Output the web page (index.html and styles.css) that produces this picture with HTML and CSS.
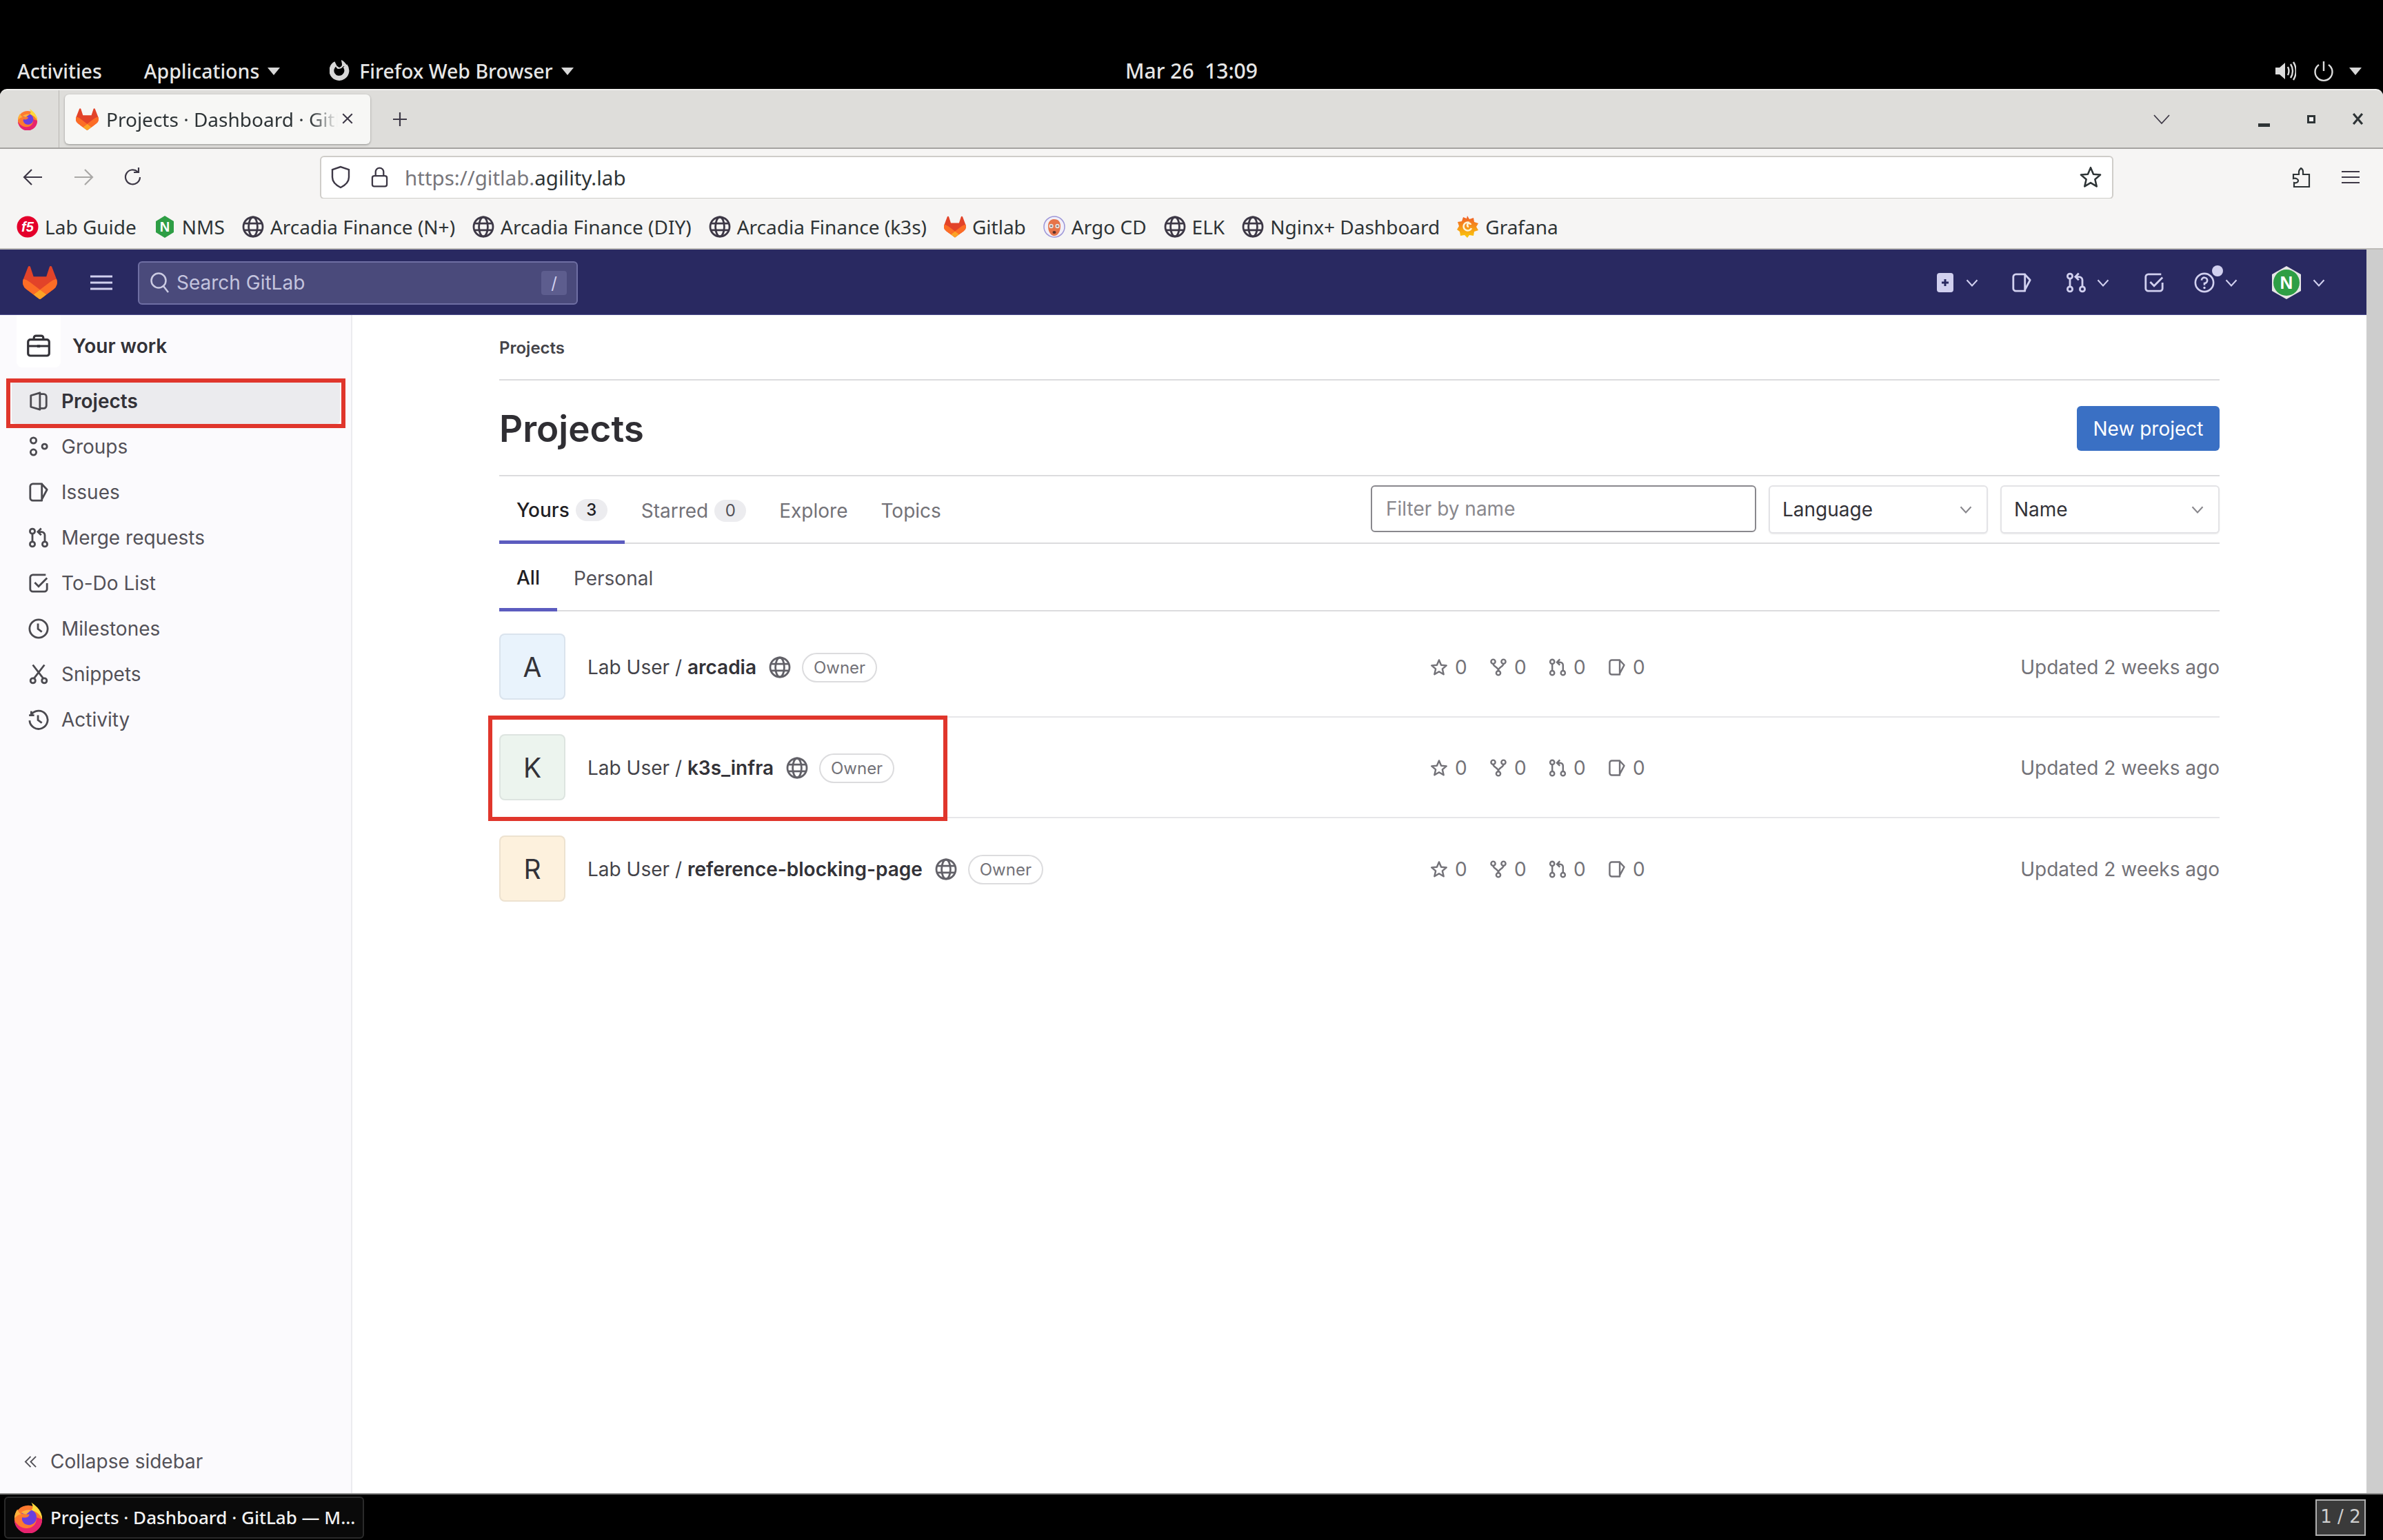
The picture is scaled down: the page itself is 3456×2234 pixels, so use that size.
FILE: index.html
```html
<!DOCTYPE html>
<html>
<head>
<meta charset="UTF-8">
<title>Projects · Dashboard · GitLab</title>
<link rel="stylesheet" href="styles.css">
</head>
<body>
<svg class="sprite" xmlns="http://www.w3.org/2000/svg">
  <symbol id="tanuki" viewBox="0 0 25 24">
    <path d="M24.507 9.5l-.034-.09L21.082.562a.896.896 0 00-1.694.091l-2.29 7.01H7.825L5.535.653a.898.898 0 00-1.694-.09L.451 9.411.416 9.5a6.297 6.297 0 002.09 7.278l.012.01.03.022 5.16 3.867 2.56 1.935 1.554 1.176a1.051 1.051 0 001.268 0l1.555-1.176 2.56-1.935 5.197-3.89.014-.01A6.297 6.297 0 0024.507 9.5z" fill="#E24329"/>
    <path d="M24.507 9.5l-.034-.09a11.44 11.44 0 00-4.56 2.051l-7.447 5.632 4.742 3.584 5.197-3.89.014-.01A6.297 6.297 0 0024.507 9.5z" fill="#FC6D26"/>
    <path d="M7.707 20.677l2.56 1.935 1.555 1.176a1.051 1.051 0 001.268 0l1.555-1.176 2.56-1.935-4.743-3.584-4.755 3.584z" fill="#FCA326"/>
    <path d="M5.01 11.461a11.43 11.43 0 00-4.56-2.05L.416 9.5a6.297 6.297 0 002.09 7.278l.012.01.03.022 5.16 3.867 4.745-3.584-7.444-5.632z" fill="#FC6D26"/>
  </symbol>
  <symbol id="firefox" viewBox="0 0 32 32">
    <circle cx="16" cy="18" r="14" fill="#ff7a2f"/>
    <path d="M30 18a14 14 0 0 1-28 1c3 6 9 9 14 8 6-1 9-6 8-11l6 2z" fill="#e6236f"/>
    <path d="M19 1c6 4 11 9 11 17-2-5-6-8-11-9 2-2 2-5 0-8z" fill="#ffd93b"/>
    <path d="M5 8c-2 3-3 6-3 9 3-3 5-4 7-4-2-1-3-3-4-5z" fill="#ffb13b"/>
    <path d="M9 12c3-3 7-4 11-3 4 2 5 6 4 9-1 5-7 7-11 5-3-2-4-5-3-7 3 1 7 0 7-3-3 0-6 0-8-1z" fill="#6a3fe0"/>
    <path d="M9 11c3-2 7-3 10-2-2 1-4 3-5 4-2 0-4-1-5-2z" fill="#ffb13b"/>
  </symbol>
  <symbol id="globe" viewBox="0 0 16 16">
    <g fill="none" stroke="currentColor" stroke-width="1.4">
      <circle cx="8" cy="8" r="7"/>
      <ellipse cx="8" cy="8" rx="3.2" ry="7"/>
      <path d="M1.2 5.6h13.6M1.2 10.4h13.6"/>
    </g>
  </symbol>
  <symbol id="i-project" viewBox="0 0 16 16">
    <path d="M2 3.6 9 1.500v13l-7-2.100zM9 2.500h3a2 2 0 0 1 2 2v7a2 2 0 0 1-2 2H9" fill="none" stroke="currentColor" stroke-width="1.500" stroke-linejoin="round"/>
  </symbol>
  <symbol id="i-group" viewBox="0 0 16 16">
    <g fill="none" stroke="currentColor" stroke-width="1.500">
      <circle cx="4" cy="3.200" r="2.200"/><circle cx="4" cy="12.300" r="2.200"/><circle cx="12.600" cy="7.800" r="1.900"/>
    </g>
  </symbol>
  <symbol id="i-issue" viewBox="0 0 16 16">
    <path d="M1.500 3.500a2 2 0 0 1 2-2h7v13h-7a2 2 0 0 1-2-2zM10.500 1.700l4 4.300-4 7.500" fill="none" stroke="currentColor" stroke-width="1.500" stroke-linejoin="round"/>
  </symbol>
  <symbol id="i-merge" viewBox="0 0 16 16">
    <g fill="none" stroke="currentColor" stroke-width="1.500">
      <circle cx="3.200" cy="3" r="1.900"/><circle cx="3.200" cy="13" r="1.900"/><circle cx="12.800" cy="13" r="1.900"/>
      <path d="M3.200 5v6M12.800 11V6a2.500 2.500 0 0 0-2.500-2.500H8M10 .8 7.400 3.500 10 6"/>
    </g>
  </symbol>
  <symbol id="i-todo" viewBox="0 0 16 16">
    <path d="M14.500 8v4.500a2 2 0 0 1-2 2h-9a2 2 0 0 1-2-2v-9a2 2 0 0 1 2-2h10M5 7.500l3 3 6.500-6.500" fill="none" stroke="currentColor" stroke-width="1.500"/>
  </symbol>
  <symbol id="i-clock" viewBox="0 0 16 16">
    <g fill="none" stroke="currentColor" stroke-width="1.500"><circle cx="8" cy="8" r="7"/><path d="M7.500 4v4.200l3 2.300"/></g>
  </symbol>
  <symbol id="i-snippet" viewBox="0 0 16 16">
    <g fill="none" stroke="currentColor" stroke-width="1.500">
      <circle cx="3.600" cy="13" r="1.900"/><circle cx="12.400" cy="13" r="1.900"/>
      <path d="M3.500 .8 11.600 11.300M12.500 .8 4.400 11.300"/>
    </g>
  </symbol>
  <symbol id="i-history" viewBox="0 0 16 16">
    <g fill="none" stroke="currentColor" stroke-width="1.500"><path d="M2.200 4.200A7 7 0 1 1 1 8.600M.6 4.600h4M2.400 1.400l-.2 3.200M7.500 4.500v3.800l3 2.200"/></g>
  </symbol>
  <symbol id="i-work" viewBox="0 0 16 16">
    <g fill="none" stroke="currentColor" stroke-width="1.500"><rect x=".8" y="3.600" width="14.400" height="11" rx="1.600"/><path d="M4.800 3.600V2.400a1.400 1.400 0 0 1 1.400-1.400h3.600a1.400 1.400 0 0 1 1.400 1.400v1.200M.8 8h14.400"/></g>
    <rect x="7" y="7.200" width="2" height="1.800" fill="currentColor"/>
  </symbol>
  <symbol id="i-star" viewBox="0 0 16 16">
    <path d="M8 1.500 9.900 6l4.700.4-3.600 3.100 1.100 4.800L8 11.800l-4.100 2.500L5 9.500 1.400 6.400 6.100 6z" fill="none" stroke="currentColor" stroke-width="1.500" stroke-linejoin="round"/>
  </symbol>
  <symbol id="i-fork" viewBox="0 0 16 16">
    <g fill="none" stroke="currentColor" stroke-width="1.500">
      <circle cx="3.400" cy="2.900" r="1.900"/><circle cx="12.600" cy="2.900" r="1.900"/><circle cx="8" cy="13.100" r="1.900"/>
      <path d="M3.400 4.800c0 3 4.600 2.600 4.600 6.400M12.600 4.800C12.600 7.800 8 7.400 8 11.200"/>
    </g>
  </symbol>
  <symbol id="i-chevron" viewBox="0 0 16 16">
    <path d="M3 5.500 8 11l5-5.500" fill="none" stroke="currentColor" stroke-width="1.400"/>
  </symbol>
</svg>

<div class="screen">
  <div class="topgap"></div>

  <div class="panel">
    <span class="panel-item activities">Activities</span>
    <span class="panel-item apps">Applications<i class="tri"></i></span>
    <span class="panel-item ffx">
      <svg class="ffx-mono" viewBox="0 0 32 32"><path d="M22.500 9.500A11 11 0 1 1 9 6.500" fill="none" stroke="#d8d8d8" stroke-width="7"/><path d="M9 9c3 1 5 3 5 3 2-1 4-2 4-4 0-3-1-5-1-7 4 2 8 6 9 11l-6-2c-2 3-5 4-8 4-2-1-3-3-3-5z" fill="#d8d8d8"/></svg>
      Firefox Web Browser<i class="tri"></i>
    </span>
    <span class="clock">Mar 26&nbsp; 13:09</span>
    <span class="tray">
      <svg class="tray-vol" viewBox="0 0 32 32"><path d="M2 11h6l8-7v24l-8-7H2z" fill="#dcdcdc"/><path d="M20 10c2 4 2 8 0 12M24 6c4 6 4 14 0 20M28 3c5 8 5 18 0 26" fill="none" stroke="#dcdcdc" stroke-width="2.400"/></svg>
      <svg class="tray-pow" viewBox="0 0 32 32"><path d="M16 2v14M9 7a12.500 12.500 0 1 0 14 0" fill="none" stroke="#dcdcdc" stroke-width="2.400"/></svg>
      <i class="tri"></i>
    </span>
  </div>

  <div class="window">
    <div class="tabbar">
      <svg class="tb-ff"><use href="#firefox"/></svg>
      <div class="tab-sep"></div>
      <div class="tab">
        <svg class="tab-fav"><use href="#tanuki"/></svg>
        <span class="tab-title">Projects · Dashboard · GitLab</span>
        <svg class="tab-x" viewBox="0 0 16 16"><path d="M2 2l12 12M14 2 2 14" stroke="#3d3846" stroke-width="1.800"/></svg>
      </div>
      <svg class="tab-new" viewBox="0 0 24 24"><path d="M12 2v20M2 12h20" stroke="#3d3846" stroke-width="2.200"/></svg>
      <div class="tb-right">
        <svg class="tb-list" viewBox="0 0 26 16"><path d="M2 2l11 12L24 2" fill="none" stroke="#3d3846" stroke-width="1.800"/></svg>
        <span class="wm wm-min"></span>
        <span class="wm wm-max"></span>
        <svg class="wm-x" viewBox="0 0 16 16"><path d="M2 1l12 14M14 1 2 15" stroke="#2e3436" stroke-width="3"/></svg>
      </div>
    </div>

    <div class="navrow">
      <svg class="nav-ic back" viewBox="0 0 30 26"><path d="M28 13H3M13 2 2 13l11 11" fill="none" stroke="#3d3846" stroke-width="2.200"/></svg>
      <svg class="nav-ic fwd" viewBox="0 0 30 26"><path d="M2 13h25M17 2l11 11-11 11" fill="none" stroke="#a9a8a6" stroke-width="2.200"/></svg>
      <svg class="nav-ic reload" viewBox="0 0 30 30"><path d="M25 15a10.500 10.500 0 1 1-3.500-8M23 1v7h-7" fill="none" stroke="#3d3846" stroke-width="2.200"/></svg>
      <div class="urlbar">
        <svg class="shield" viewBox="0 0 30 34"><path d="M15 2 3 6v11c0 8 6 12 12 15 6-3 12-7 12-15V6z" fill="none" stroke="#3d3846" stroke-width="2.400"/></svg>
        <svg class="lock" viewBox="0 0 26 32"><rect x="2" y="14" width="22" height="16" rx="3" fill="none" stroke="#3d3846" stroke-width="2.400"/><path d="M7 14V8a6 6 0 0 1 12 0v6" fill="none" stroke="#3d3846" stroke-width="2.400"/></svg>
        <span class="url"><span class="url-dim">https://gitlab.</span>agility.lab</span>
        <svg class="url-star" viewBox="0 0 16 16"><path d="M8 1.500 9.900 6l4.700.4-3.600 3.100 1.100 4.800L8 11.800l-4.100 2.500L5 9.500 1.400 6.400 6.100 6z" fill="none" stroke="#2e3436" stroke-width="1.200" stroke-linejoin="round"/></svg>
      </div>
      <svg class="puzzle" viewBox="0 0 28 32"><path d="M2 12h8V8c0-2 1-3 3-5 2 1 3 3 3 5v4h9v18H3v-6c4 1 6-1 6-3s-3-4-7-3z" fill="none" stroke="#2e3436" stroke-width="2.200"/></svg>
      <svg class="menu" viewBox="0 0 26 20"><path d="M0 2h26M0 10h26M0 18h26" stroke="#3d3846" stroke-width="2.200"/></svg>
    </div>

    <div class="bookmarks">
      <span class="bm"><svg class="bm-ic" viewBox="0 0 32 32"><circle cx="16" cy="16" r="15.500" fill="#e4002b"/><text x="16" y="23" text-anchor="middle" class="f5">f5</text></svg>Lab Guide</span>
      <span class="bm"><svg class="bm-ic" viewBox="0 0 32 32"><path d="M16 0l13 8v16l-13 8-13-8V8z" fill="#2e9e45"/><text x="16" y="23" text-anchor="middle" class="nx">N</text></svg>NMS</span>
      <span class="bm"><svg class="bm-ic bm-globe"><use href="#globe"/></svg>Arcadia Finance (N+)</span>
      <span class="bm"><svg class="bm-ic bm-globe"><use href="#globe"/></svg>Arcadia Finance (DIY)</span>
      <span class="bm"><svg class="bm-ic bm-globe"><use href="#globe"/></svg>Arcadia Finance (k3s)</span>
      <span class="bm"><svg class="bm-ic"><use href="#tanuki"/></svg>Gitlab</span>
      <span class="bm"><svg class="bm-ic" viewBox="0 0 32 32"><circle cx="16" cy="16" r="15" fill="#f2eff8" stroke="#9d97d8" stroke-width="1.500"/><path d="M16 5c6 0 9 4 9 10 0 8-4 14-9 14S7 23 7 15C7 9 10 5 16 5z" fill="#e6744a"/><circle cx="11.500" cy="15" r="3.200" fill="#e8ddd8"/><circle cx="20.500" cy="15" r="3.200" fill="#e8ddd8"/><circle cx="11.500" cy="15" r="1.300" fill="#6a6a78"/><circle cx="20.500" cy="15" r="1.300" fill="#6a6a78"/><ellipse cx="16" cy="24" rx="2.500" ry="2" fill="#5a3028"/></svg>Argo CD</span>
      <span class="bm"><svg class="bm-ic bm-globe"><use href="#globe"/></svg>ELK</span>
      <span class="bm"><svg class="bm-ic bm-globe"><use href="#globe"/></svg>Nginx+ Dashboard</span>
      <span class="bm"><svg class="bm-ic" viewBox="0 0 32 32"><defs><linearGradient id="gf" x1="0" y1="0" x2="0" y2="1"><stop offset="0" stop-color="#f05a28"/><stop offset="1" stop-color="#fbca0a"/></linearGradient></defs><path d="M15 0l3 5 6-2 1 6 6 2-3 5 3 5-6 2-1 6-6-1-3 4-4-4-6 1-1-6-4-3 3-5-2-6 6-1 2-6 5 2z" fill="url(#gf)"/><path d="M21 18a6 6 0 1 1-3-8M17 16a2.500 2.500 0 1 1 3-3" fill="none" stroke="#fdf3d8" stroke-width="2.600"/></svg>Grafana</span>
    </div>

    <div class="viewport">
      <div class="page">
        <header class="gl-header">
          <svg class="gl-logo"><use href="#tanuki"/></svg>
          <svg class="gl-burger" viewBox="0 0 32 22"><path d="M0 2h32M0 11h32M0 20h32" stroke="#d1d0ef" stroke-width="3"/></svg>
          <div class="gl-search">
            <svg class="gl-search-ic" viewBox="0 0 28 32"><circle cx="13" cy="13" r="10.500" fill="none" stroke="#cbcbe3" stroke-width="2.500"/><path d="M20 21l7 9" stroke="#cbcbe3" stroke-width="2.500"/></svg>
            <span class="gl-search-text">Search GitLab</span>
            <span class="gl-slash">/</span>
          </div>
          <div class="gl-actions">
            <span class="ga ga-new"><svg class="ga-plus" viewBox="0 0 24 30"><rect y="1" width="24" height="28" rx="4" fill="#d1d0ef"/><path d="M12 10v10M7 15h10" stroke="#292961" stroke-width="3"/></svg><svg class="ga-chev"><use href="#i-chevron"/></svg></span>
            <span class="ga ga-issue"><svg class="ga-ic"><use href="#i-issue"/></svg></span>
            <span class="ga ga-mr"><svg class="ga-ic"><use href="#i-merge"/></svg><svg class="ga-chev"><use href="#i-chevron"/></svg></span>
            <span class="ga ga-todo"><svg class="ga-ic"><use href="#i-todo"/></svg></span>
            <span class="ga ga-help"><svg class="ga-ic" viewBox="0 0 16 16"><circle cx="8" cy="8" r="7" fill="none" stroke="currentColor" stroke-width="1.400"/><path d="M5.800 6.200A2.200 2.200 0 1 1 8 8.500v1.500" fill="none" stroke="currentColor" stroke-width="1.400"/><circle cx="8" cy="12" r=".9" fill="currentColor"/></svg><i class="ga-dot"></i><svg class="ga-chev"><use href="#i-chevron"/></svg></span>
            <span class="ga ga-user"><svg class="ga-avatar" viewBox="0 0 46 48"><path d="M23 0l21 12v24L23 48 2 36V12z" fill="#e6e6e6"/><circle cx="23" cy="24" r="19" fill="#2e9e45"/><text x="23" y="33" text-anchor="middle" class="nx-big">N</text></svg><svg class="ga-chev"><use href="#i-chevron"/></svg></span>
          </div>
        </header>

        <div class="gl-body">
          <aside class="sidebar">
            <div class="side-head">
              <span class="side-head-ic"><svg><use href="#i-work"/></svg></span>
              <span>Your work</span>
            </div>
            <nav class="side-nav">
              <a class="side-item is-active"><svg><use href="#i-project"/></svg>Projects</a>
              <a class="side-item"><svg><use href="#i-group"/></svg>Groups</a>
              <a class="side-item"><svg><use href="#i-issue"/></svg>Issues</a>
              <a class="side-item"><svg><use href="#i-merge"/></svg>Merge requests</a>
              <a class="side-item"><svg><use href="#i-todo"/></svg>To-Do List</a>
              <a class="side-item"><svg><use href="#i-clock"/></svg>Milestones</a>
              <a class="side-item"><svg><use href="#i-snippet"/></svg>Snippets</a>
              <a class="side-item"><svg><use href="#i-history"/></svg>Activity</a>
            </nav>
            <div class="side-collapse">
              <svg viewBox="0 0 20 20"><path d="M10 2 2 10l8 8M18 2l-8 8 8 8" fill="none" stroke="currentColor" stroke-width="2"/></svg>
              Collapse sidebar
            </div>
          </aside>

          <main class="content">
            <div class="crumbs">Projects</div>
            <div class="title-row">
              <h1>Projects</h1>
              <button class="btn-new">New project</button>
            </div>

            <div class="tabs-row">
              <a class="gl-tab is-on">Yours <span class="count">3</span></a>
              <a class="gl-tab">Starred <span class="count">0</span></a>
              <a class="gl-tab">Explore</a>
              <a class="gl-tab">Topics</a>
              <div class="filters">
                <input class="filter-input" type="text" placeholder="Filter by name">
                <div class="select sel-lang">Language<svg><use href="#i-chevron"/></svg></div>
                <div class="select sel-name">Name<svg><use href="#i-chevron"/></svg></div>
              </div>
            </div>

            <div class="subtabs-row">
              <a class="gl-tab sub is-on">All</a>
              <a class="gl-tab sub">Personal</a>
            </div>

            <div class="project first">
              <div class="avatar av-a">A</div>
              <div class="p-title"><span class="p-ns">Lab User / <b>arcadia</b></span><svg class="p-globe"><use href="#globe"/></svg><span class="owner">Owner</span></div>
              <div class="stats">
                <span><svg><use href="#i-star"/></svg>0</span><span><svg><use href="#i-fork"/></svg>0</span><span><svg><use href="#i-merge"/></svg>0</span><span><svg><use href="#i-issue"/></svg>0</span>
              </div>
              <div class="updated">Updated 2 weeks ago</div>
            </div>
            <div class="project">
              <div class="avatar av-k">K</div>
              <div class="p-title"><span class="p-ns">Lab User / <b>k3s_infra</b></span><svg class="p-globe"><use href="#globe"/></svg><span class="owner">Owner</span></div>
              <div class="stats">
                <span><svg><use href="#i-star"/></svg>0</span><span><svg><use href="#i-fork"/></svg>0</span><span><svg><use href="#i-merge"/></svg>0</span><span><svg><use href="#i-issue"/></svg>0</span>
              </div>
              <div class="updated">Updated 2 weeks ago</div>
            </div>
            <div class="project last">
              <div class="avatar av-r">R</div>
              <div class="p-title"><span class="p-ns">Lab User / <b>reference-blocking-page</b></span><svg class="p-globe"><use href="#globe"/></svg><span class="owner">Owner</span></div>
              <div class="stats">
                <span><svg><use href="#i-star"/></svg>0</span><span><svg><use href="#i-fork"/></svg>0</span><span><svg><use href="#i-merge"/></svg>0</span><span><svg><use href="#i-issue"/></svg>0</span>
              </div>
              <div class="updated">Updated 2 weeks ago</div>
            </div>
          </main>
        </div>
      </div>
      <div class="scrollbar"></div>
    </div>
  </div>

  <div class="taskbar">
    <div class="task-btn"><svg><use href="#firefox"/></svg>Projects · Dashboard · GitLab — M...</div>
    <div class="pager">1 / 2</div>
  </div>

  <div class="mark mark-nav"></div>
  <div class="mark mark-row"></div>
</div>
</body>
</html>
```

FILE: styles.css
```css
* { box-sizing: border-box; }

html, body {
  margin: 0;
  padding: 0;
  background: #000;
}

.sprite {
  position: absolute;
  width: 0;
  height: 0;
}

.screen {
  position: relative;
  width: 3456px;
  height: 2234px;
  overflow: hidden;
  display: flex;
  flex-direction: column;
  font-family: "Noto Sans", sans-serif;
}

.topgap { height: 60px; background: #000; }

/* gnome panel */
.panel {
  height: 69px;
  background: #000;
  color: #e6e6e6;
  display: flex;
  align-items: center;
  position: relative;
  font-size: 28.5px;
  font-weight: 500;
  padding-top: 16px;
}
.panel-item { display: flex; align-items: center; white-space: nowrap; }
.activities { margin-left: 25px; }
.apps { margin-left: 61px; }
.ffx { margin-left: 72px; }
.ffx-mono { width: 32px; height: 32px; margin-right: 11px; margin-top: -2px; }
.tri {
  display: inline-block;
  width: 0;
  height: 0;
  margin-left: 12px;
  margin-top: 2px;
  border-left: 9px solid transparent;
  border-right: 9px solid transparent;
  border-top: 11px solid #d8d8d8;
}
.clock {
  position: absolute;
  left: 0;
  right: 0;
  text-align: center;
  font-size: 30px;
}
.tray {
  margin-left: auto;
  margin-right: 31px;
  display: flex;
  align-items: center;
}
.tray-vol { width: 32px; height: 32px; }
.tray-pow { width: 32px; height: 34px; margin-left: 24px; }
.tray .tri { margin-left: 21px; }

/* firefox window */
.window {
  flex: 1;
  min-height: 0;
  display: flex;
  flex-direction: column;
  border-top: 2px solid #f2f1ef;
  border-radius: 10px 10px 0 0;
  overflow: hidden;
  background: #f6f5f4;
}

.tabbar {
  height: 85px;
  background: #deddda;
  border-bottom: 2px solid #a5a3a0;
  display: flex;
  align-items: center;
  position: relative;
}
.tb-ff { width: 32px; height: 32px; margin-left: 24px; }
.tab-sep { width: 1px; height: 100%; background: #b8b6b2; margin-left: 29px; }
.tab {
  width: 443px;
  height: 72px;
  margin-left: 8px;
  margin-top: 1px;
  background: #f7f7f5;
  border-radius: 6px;
  box-shadow: 0 1px 3px rgba(0, 0, 0, .35);
  display: flex;
  align-items: center;
  padding-left: 16px;
  position: relative;
}
.tab-fav { width: 33px; height: 32px; flex: none; }
.tab-title {
  margin-left: 11px;
  width: 336px;
  overflow: hidden;
  white-space: nowrap;
  font-size: 28px;
  color: #2e3436;
  -webkit-mask-image: linear-gradient(90deg, #000 88%, transparent);
  mask-image: linear-gradient(90deg, #000 88%, transparent);
}
.tab-x { width: 18px; height: 18px; position: absolute; right: 24px; top: 26px; }
.tab-new { width: 24px; height: 24px; margin-left: 31px; }
.tb-right {
  margin-left: auto;
  display: flex;
  align-items: center;
}
.tb-list { width: 26px; height: 16px; margin-right: 127px; }
.wm { display: block; background: #2e3436; }
.wm-min { width: 17px; height: 5px; margin-top: 18px; margin-right: 54px; }
.wm-max { width: 12px; height: 12px; border: 3px solid #2e3436; background: #f6f5f4; margin-right: 53px; }
.wm-x { width: 17px; height: 17px; margin-right: 28px; }

.navrow {
  height: 72px;
  display: flex;
  align-items: center;
  padding-top: 10px;
  background: #f6f5f4;
}
.nav-ic { flex: none; }
.back { width: 30px; height: 26px; margin-left: 33px; }
.fwd { width: 30px; height: 26px; margin-left: 43px; }
.reload { width: 30px; height: 30px; margin-left: 42px; }
.urlbar {
  width: 2601px;
  height: 63px;
  margin-left: 256px;
  background: #fff;
  border: 2px solid #cfcdc9;
  border-radius: 6px;
  display: flex;
  align-items: center;
  padding-left: 13px;
}
.shield { width: 30px; height: 34px; }
.lock { width: 25px; height: 32px; margin-left: 29px; }
.url { margin-left: 24px; font-size: 29.5px; color: #2e3436; }
.url-dim { color: #77767b; }
.url-star { width: 34px; height: 34px; margin-left: auto; margin-right: 14px; }
.puzzle { width: 28px; height: 32px; margin-left: 259px; }
.menu { width: 26px; height: 20px; margin-left: 44px; }

.bookmarks {
  height: 74px;
  display: flex;
  align-items: center;
  padding-left: 24px;
  padding-top: 10px;
  gap: 25px;
  background: #f6f5f4;
  border-bottom: 2px solid #bdbbb8;
  font-size: 28px;
  color: #2e3436;
}
.bm { display: flex; align-items: center; white-space: nowrap; }
.bm-ic { width: 32px; height: 32px; margin-right: 9px; flex: none; }
.bm-globe { color: #3d3846; }
.f5 { font: italic 700 20px "Liberation Sans", sans-serif; fill: #fff; }
.nx { font: 700 20px "Liberation Sans", sans-serif; fill: #fff; }

.viewport {
  flex: 1;
  min-height: 0;
  display: flex;
}
.page {
  flex: 1;
  min-width: 0;
  display: flex;
  flex-direction: column;
  background: #fff;
  font-family: Inter, "Noto Sans", sans-serif;
}
.scrollbar { width: 24px; background: #cdcdcd; }

/* gitlab top bar */
.gl-header {
  height: 95px;
  flex: none;
  background: #292961;
  display: flex;
  align-items: center;
  color: #d1d0ef;
  border-bottom: 1px solid #4b4b8a;
  padding-top: 2px;
}
.gl-logo { width: 50px; height: 48px; margin-left: 33px; }
.gl-burger { width: 32px; height: 22px; margin-left: 48px; }
.gl-search {
  width: 638px;
  height: 63px;
  margin-left: 37px;
  background: #4a4a7b;
  border: 2px solid #6f6fa3;
  border-radius: 6px;
  display: flex;
  align-items: center;
  padding-left: 15px;
}
.gl-search-ic { width: 28px; height: 32px; flex: none; }
.gl-search-text { margin-left: 11px; font-size: 28px; color: #c4c4de; }
.gl-slash {
  margin-left: auto;
  margin-right: 14px;
  width: 37px;
  height: 35px;
  border-radius: 4px;
  background: #5d5d8e;
  color: #d1d0ef;
  font-size: 24px;
  text-align: center;
  line-height: 35px;
}
.gl-actions {
  margin-left: auto;
  margin-right: 57px;
  display: flex;
  align-items: center;
}
.ga { display: flex; align-items: center; position: relative; }
.ga-issue { margin-left: 45px; }
.ga-mr { margin-left: 49px; }
.ga-todo { margin-left: 47px; }
.ga-help { margin-left: 43px; }
.ga-user { margin-left: 45px; }
.ga-plus { width: 24px; height: 30px; margin-right: 3px; }
.ga-ic { width: 30px; height: 32px; }
.ga-chev { width: 24px; height: 24px; margin-left: 12px; }
.ga-dot {
  position: absolute;
  left: 26px;
  top: -9px;
  width: 16px;
  height: 16px;
  border-radius: 50%;
  background: #d1d0ef;
}
.ga-avatar { width: 46px; height: 48px; }
.nx-big { font: 700 26px "Liberation Sans", sans-serif; fill: #fff; }

.gl-body {
  flex: 1;
  min-height: 0;
  display: flex;
}

/* left sidebar */
.sidebar {
  width: 511px;
  flex: none;
  background: #fbfafd;
  border-right: 2px solid #ececef;
  display: flex;
  flex-direction: column;
  color: #535158;
  font-size: 28px;
}
.side-head {
  height: 92px;
  display: flex;
  align-items: flex-start;
  font-weight: 600;
  color: #333238;
}
.side-head > span:last-child { margin-left: 17px; margin-top: 28px; }
.side-head-ic {
  width: 64px;
  height: 76px;
  margin-left: 24px;
  padding-top: 14px;
  background: #fff;
  border-radius: 0 0 8px 8px;
  display: flex;
  align-items: center;
  justify-content: center;
}
.side-head-ic svg { width: 34px; height: 34px; color: #333238; }
.side-nav { display: flex; flex-direction: column; }
.side-item {
  height: 66px;
  display: flex;
  align-items: center;
  padding-left: 41px;
  gap: 18px;
}
.side-item svg { width: 30px; height: 30px; color: #4b4a50; flex: none; }
.side-item.is-active {
  height: 66px;
  margin: 0 16px 0 17px;
  padding-left: 24px;
  background: #ebebee;
  border-radius: 6px;
  font-weight: 600;
  color: #333238;
}
.side-collapse {
  margin-top: auto;
  height: 92px;
  display: flex;
  align-items: center;
  padding-left: 35px;
  gap: 19px;
  font-size: 28px;
}
.side-collapse svg { width: 19px; height: 19px; flex: none; }

/* main column */
.content {
  flex: 1;
  min-width: 0;
  padding: 0 213px;
  color: #333238;
  font-size: 28px;
}
.crumbs {
  height: 95px;
  border-bottom: 2px solid #dcdcde;
  font-size: 24px;
  font-weight: 600;
  padding-top: 33px;
  color: #444349;
}
.title-row {
  height: 139px;
  border-bottom: 2px solid #dcdcde;
  display: flex;
  align-items: center;
  justify-content: space-between;
  padding-top: 2px;
}
h1 {
  margin: 0;
  font-size: 53px;
  font-weight: 600;
  color: #2f2e33;
}
.btn-new {
  width: 207px;
  height: 65px;
  border: 0;
  border-radius: 6px;
  background: #3a70c4;
  color: #fff;
  font: 400 28px Inter, sans-serif;
}
.tabs-row {
  height: 98px;
  border-bottom: 2px solid #dcdcde;
  display: flex;
  align-items: stretch;
}
.gl-tab {
  display: flex;
  align-items: center;
  padding: 3px 24px 0;
  height: 96px;
  color: #737278;
  gap: 9px;
  white-space: nowrap;
}
.gl-tab.is-on {
  color: #1f1e24;
  font-weight: 500;
  border-bottom: 5px solid #5c5cbf;
  height: 98px;
  padding: 4px 25px 0;
}
.count {
  width: 46px;
  height: 32px;
  border-radius: 16px;
  background: #ececef;
  font-size: 24px;
  text-align: center;
  line-height: 32px;
  color: #535158;
}
.gl-tab.is-on .count { color: #1f1e24; }
.filters {
  margin-left: auto;
  display: flex;
  gap: 18px;
  padding-top: 13px;
}
.filter-input {
  width: 559px;
  height: 68px;
  border: 2px solid #89888d;
  border-radius: 6px;
  padding: 0 20px;
  font: 400 28px Inter, sans-serif;
  color: #333238;
  background: #fff;
}
.filter-input::placeholder { color: #89888d; opacity: 1; }
.select {
  height: 70px;
  border-radius: 6px;
  border: 2px solid #e3e3e6;
  box-shadow: 0 1px 2px rgba(0, 0, 0, .08);
  display: flex;
  align-items: center;
  justify-content: space-between;
  padding: 0 18px;
  color: #333238;
  background: #fff;
}
.sel-lang { width: 318px; }
.sel-name { width: 318px; }
.select svg { width: 24px; height: 24px; color: #89888d; }

.subtabs-row {
  height: 98px;
  border-bottom: 2px solid #dcdcde;
  display: flex;
}
.gl-tab.sub { height: 96px; color: #535158; }
.gl-tab.sub.is-on { height: 98px; color: #1f1e24; }

/* project list */
.project {
  height: 146px;
  border-bottom: 2px solid #e6e6e9;
  display: flex;
  align-items: center;
}
.project.first { height: 154px; padding-top: 8px; }
.project.last { border-bottom: 0; }
.avatar {
  width: 96px;
  height: 96px;
  flex: none;
  border-radius: 8px;
  border: 2px solid rgba(31, 30, 36, .07);
  display: flex;
  align-items: center;
  justify-content: center;
  font-size: 39px;
  color: #333238;
}
.av-a { background: #e9f3fc; }
.av-k { background: #ecf4ee; }
.av-r { background: #fdf1dd; }
.p-title {
  width: 1222px;
  flex: none;
  margin-left: 32px;
  padding-top: 2px;
  display: flex;
  align-items: center;
  color: #444349;
}
.p-ns { white-space: nowrap; }
.p-ns b { font-weight: 600; color: #333238; }
.p-globe { width: 32px; height: 32px; margin-left: 18px; color: #626168; flex: none; }
.owner {
  margin-left: 16px;
  width: 109px;
  height: 43px;
  border: 2px solid #dcdcde;
  border-radius: 22px;
  font-size: 24px;
  color: #737278;
  text-align: center;
  line-height: 39px;
}
.stats {
  display: flex;
  padding-top: 2px;
  color: #737278;
}
.stats span {
  width: 86px;
  display: flex;
  align-items: center;
  gap: 10px;
}
.stats svg { width: 26px; height: 26px; }
.updated {
  margin-left: auto;
  padding-top: 2px;
  color: #737278;
  white-space: nowrap;
}

/* bottom window list */
.taskbar {
  height: 68px;
  flex: none;
  background: #000;
  border-top: 2px solid #8a8a8a;
  display: flex;
  align-items: center;
  position: relative;
}
.task-btn {
  width: 522px;
  height: 61px;
  margin-left: 6px;
  border-radius: 6px;
  background: #0a0a0a;
  box-shadow: inset 0 0 0 2px #2a2a2a;
  color: #f2f2f2;
  display: flex;
  align-items: center;
  padding-left: 12px;
  font-size: 26px;
  font-weight: 500;
  white-space: nowrap;
}
.task-btn svg { width: 46px; height: 46px; margin-right: 9px; flex: none; }
.pager {
  margin-left: auto;
  margin-right: 25px;
  width: 73px;
  height: 53px;
  background: #3a3a3a;
  border: 2px solid #b0b0b0;
  color: #cfcfcf;
  font: 500 26px "DejaVu Sans", sans-serif;
  text-align: center;
  line-height: 46px;
  white-space: nowrap;
}

/* red annotation boxes drawn on top of the screenshot */
.mark {
  position: absolute;
  border: 6px solid #e0362c;
}
.mark-nav { left: 9px; top: 549px; width: 492px; height: 72px; }
.mark-row { left: 708px; top: 1038px; width: 666px; height: 153px; }
```
